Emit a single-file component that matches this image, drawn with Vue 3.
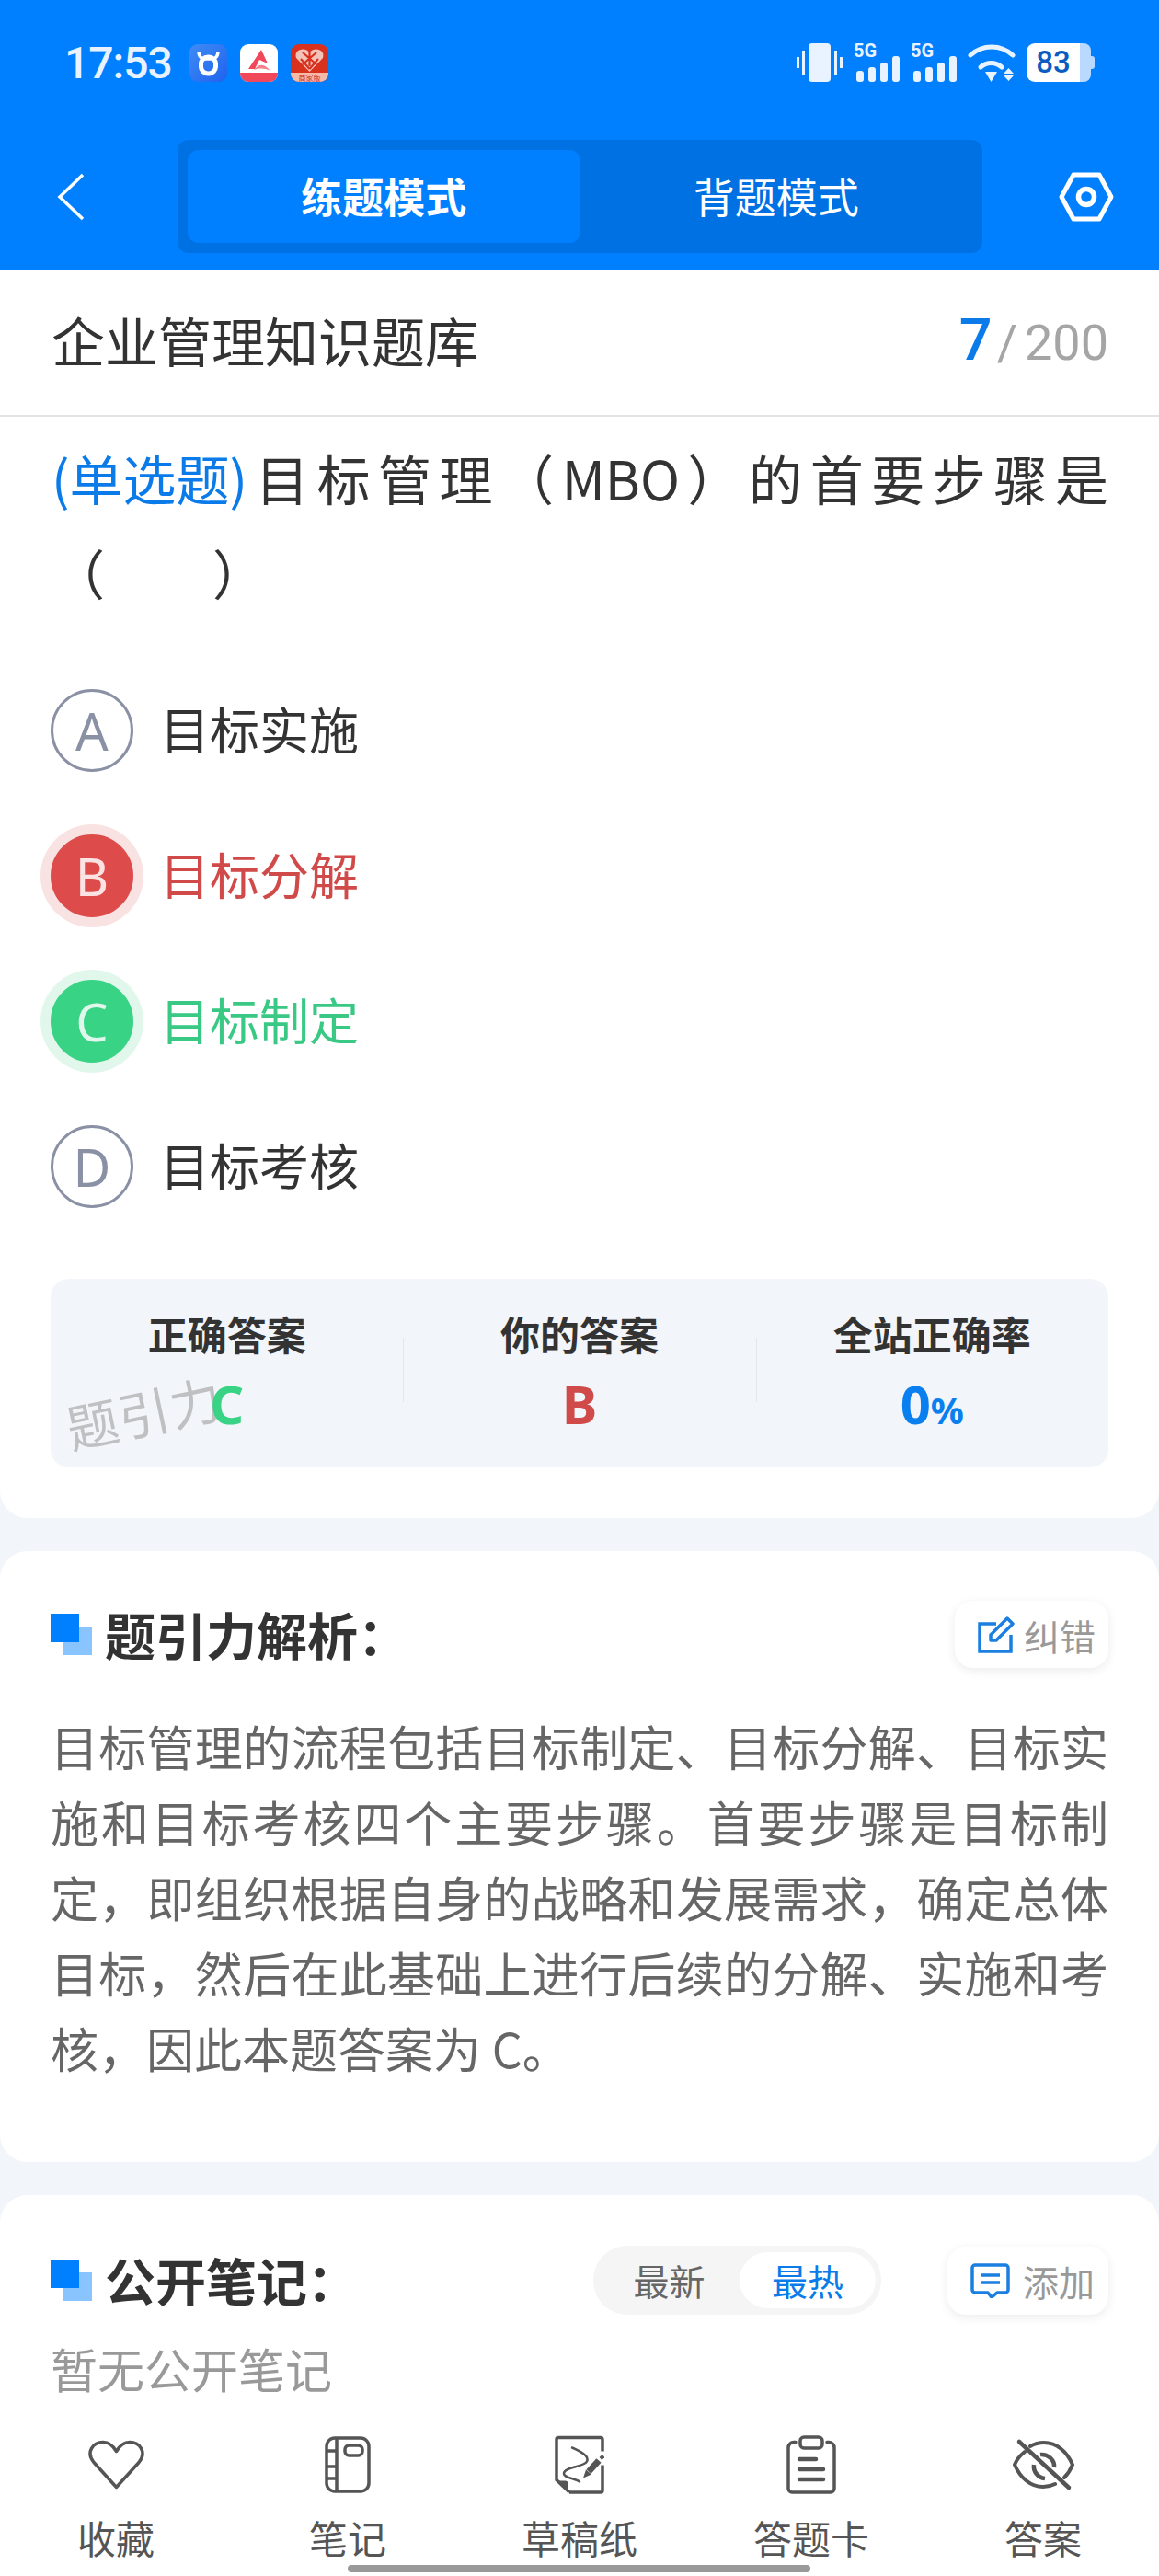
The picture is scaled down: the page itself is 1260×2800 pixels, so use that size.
<template>
  <div class="page">
    <!-- blue top area -->
    <div class="top">
      <div class="status">
        <div class="status-left">
          <span class="time">17:53</span>
          <span class="app app-blue">
            <svg viewBox="0 0 41 41" width="41" height="41"><path d="M10 8c0 5 2 7 5 8h11c3-1 5-3 5-8" fill="none" stroke="#fff" stroke-width="3.5"/><rect x="12.500" y="14" width="16" height="18" rx="7.500" fill="none" stroke="#fff" stroke-width="5"/></svg>
          </span>
          <span class="app app-white">
            <svg viewBox="0 0 41 41" width="41" height="41"><path d="M9 27 23 6l7 15-9-4-5 10z" fill="#f0485a"/><path d="M15 28c6-7 11-7 18 1-7-3-11-3-18-1z" fill="#f5808c"/><rect x="0" y="31" width="41" height="10" fill="#f0485a"/></svg>
          </span>
          <span class="app app-red">
            <svg viewBox="0 0 41 41" width="41" height="41"><path d="M20.500 30 6 15c-3-9 9-13 14.500-6C26 2 38 6 35 15z" fill="#f3c2b8"/><path d="M20.500 27 11 16M20.500 27 30 16M13 9l15 13M28 9 13 22M20.500 8v16" stroke="#d8321f" stroke-width="2.200"/><rect x="0" y="31" width="41" height="10" fill="#f7b9a8"/><text x="20.500" y="39.500" font-size="8" text-anchor="middle" fill="#c8301f">商家版</text></svg>
          </span>
        </div>
        <div class="status-right">
          <svg width="50" height="42" viewBox="0 0 50 42"><rect x="13" y="0" width="24" height="42" rx="4" fill="#e8f3ff"/><rect x="0" y="15" width="3" height="12" fill="#e8f3ff"/><rect x="6" y="8" width="3" height="26" fill="#e8f3ff"/><rect x="41" y="8" width="3" height="26" fill="#e8f3ff"/><rect x="47" y="15" width="3" height="12" fill="#e8f3ff"/></svg>
          <span class="sig"><span class="five">5G</span><span class="bars"><i class="b1"></i><i class="b2"></i><i class="b3"></i><i class="b4"></i></span></span>
          <span class="sig"><span class="five">5G</span><span class="bars"><i class="b1"></i><i class="b2"></i><i class="b3"></i><i class="b4"></i></span></span>
          <svg width="52" height="42" viewBox="0 0 52 42"><path d="M3 13C16 1 36 1 49 13" fill="none" stroke="#e8f3ff" stroke-width="5" stroke-linecap="round"/><path d="M14 26c7-6 16-6 23 0" fill="none" stroke="#e8f3ff" stroke-width="5" stroke-linecap="round"/><path d="M19 31h13l-6.500 11z" fill="#e8f3ff"/><path d="M39 33l5.500-6 5.500 6zM39 35h11l-5.500 6z" fill="#e8f3ff"/></svg>
          <span class="battery"><span class="battery-num">83</span><span class="battery-rest"></span><span class="battery-tip"></span></span>
        </div>
      </div>
      <div class="nav">
        <svg class="back" width="30" height="52" viewBox="0 0 30 52"><path d="M28 2 3 26l25 24" fill="none" stroke="#fff" stroke-width="3.500"/></svg>
        <div class="mode">
          <div class="mode-item on">练题模式</div>
          <div class="mode-item">背题模式</div>
        </div>
        <svg class="gear" width="60" height="54" viewBox="0 0 60 54"><path d="M16 3h28l13 24-13 24H16L3 27z" fill="none" stroke="#fff" stroke-width="5" stroke-linejoin="round"/><circle cx="30" cy="27" r="8.500" fill="none" stroke="#fff" stroke-width="5.500"/></svg>
      </div>
    </div>

    <!-- question -->
    <div class="card first">
      <div class="bank">
        <span class="bank-name">企业管理知识题库</span>
        <span class="bank-count"><b>7</b><i>/</i>200</span>
      </div>
      <div class="question">
        <span class="q-type">(单选题)</span>目标管理（MBO）的首要步骤是<span class="blank">（&nbsp;&nbsp;&nbsp;&nbsp;&nbsp;&nbsp;&nbsp;&nbsp;&nbsp;）</span>
      </div>
      <div class="options">
        <div v-for="o in options" :key="o.key" class="option" :class="o.state">
          <span class="letter">{{ o.key }}</span>
          <span class="opt-text">{{ o.text }}</span>
        </div>
      </div>
      <div class="result">
        <span class="watermark">题引力</span>
        <div class="res-col">
          <div class="res-label">正确答案</div>
          <div class="res-val green">C</div>
        </div>
        <div class="res-col">
          <div class="res-label">你的答案</div>
          <div class="res-val red">B</div>
        </div>
        <div class="res-col">
          <div class="res-label">全站正确率</div>
          <div class="res-val blue">0<small>%</small></div>
        </div>
      </div>
    </div>

    <!-- analysis -->
    <div class="card analysis">
      <div class="sec-head">
        <span class="sec-mark"></span>
        <span class="sec-title">题引力解析：</span>
        <span class="chip">
          <svg width="40" height="40" viewBox="0 0 40 40"><path d="M20 8H2v30h34V20" fill="none" stroke="#1a7fe0" stroke-width="3.500"/><path d="M14 20 32 2l6 6-18 18h-6z" fill="none" stroke="#1a7fe0" stroke-width="3.500" stroke-linejoin="round"/></svg>
          <span>纠错</span>
        </span>
      </div>
      <p class="analysis-text">目标管理的流程包括目标制定、目标分解、目标实施和目标考核四个主要步骤。首要步骤是目标制定，即组织根据自身的战略和发展需求，确定总体目标，然后在此基础上进行后续的分解、实施和考核，因此本题答案为 C。</p>
    </div>

    <!-- notes -->
    <div class="card notes">
      <div class="sec-head">
        <span class="sec-mark"></span>
        <span class="sec-title">公开笔记：</span>
        <span class="sort">
          <span class="sort-item">最新</span>
          <span class="sort-item on">最热</span>
        </span>
        <span class="chip add">
          <svg width="43" height="38" viewBox="0 0 43 38"><path d="M5 2h33a3 3 0 0 1 3 3v24a3 3 0 0 1-3 3h-9l-6 5-4-5H5a3 3 0 0 1-3-3V5a3 3 0 0 1 3-3z" fill="none" stroke="#1a7fe0" stroke-width="3.500" stroke-linejoin="round"/><path d="M11 13h21M11 21h21" stroke="#1a7fe0" stroke-width="3.500"/></svg>
          <span>添加</span>
        </span>
      </div>
      <div class="empty">暂无公开笔记</div>
    </div>

    <!-- bottom bar -->
    <div class="tabbar">
      <div class="tab">
        <svg width="63" height="55" viewBox="0 0 63 55"><path d="M31.500 52 7 25C-2 14 6 3 17 3c6 0 11 4 14.500 10C35 7 40 3 46 3c11 0 19 11 10 22z" fill="none" stroke="#555" stroke-width="3.500" stroke-linejoin="round"/></svg>
        <span>收藏</span>
      </div>
      <div class="tab">
        <svg width="50" height="62" viewBox="0 0 50 62"><rect x="2" y="2" width="46" height="58" rx="9" fill="none" stroke="#555" stroke-width="3.500"/><path d="M13 2v58M2 16h11M2 33h11M2 46h11" fill="none" stroke="#555" stroke-width="3.500"/><rect x="22" y="10" width="19" height="11" rx="4.500" fill="none" stroke="#555" stroke-width="3.500"/></svg>
        <span>笔记</span>
      </div>
      <div class="tab">
        <svg width="54" height="63" viewBox="0 0 54 63"><path d="M16 61.500h34a2 2 0 0 0 2-2V32M52 17V4a2 2 0 0 0-2-2H4a2 2 0 0 0-2 2v44l14 13.500" fill="none" stroke="#555" stroke-width="3.500"/><path d="M2 49h9a4 4 0 0 1 4 4v9z" fill="#555"/><path d="M19 13c9 4 19 9 16 15-3 6-25 6-25 13 0 5 12 5 17 9" fill="none" stroke="#555" stroke-width="2.500" stroke-linecap="round"/><path d="M37 39l11-12" stroke="#555" stroke-width="7"/><path d="M31 46l3-9 6 5z" fill="#555"/><path d="M50 25l3-3" stroke="#555" stroke-width="4"/></svg>
        <span>草稿纸</span>
      </div>
      <div class="tab">
        <svg width="54" height="64" viewBox="0 0 54 64"><path d="M10 7.500H8a6 6 0 0 0-6 6V58a4 4 0 0 0 4 4h42a4 4 0 0 0 4-4V13.500a6 6 0 0 0-6-6h-2" fill="none" stroke="#555" stroke-width="3.500" stroke-linecap="round"/><rect x="15" y="2" width="24" height="12" rx="4" fill="none" stroke="#555" stroke-width="3.500"/><path d="M14 26h18M14 37h26M14 48h26" stroke="#555" stroke-width="4.500" stroke-linecap="round"/></svg>
        <span>答题卡</span>
      </div>
      <div class="tab">
        <svg width="67" height="54" viewBox="0 0 67 54"><path d="M19 7c5-3 10-4 15-4 14 0 25 10 31 24-2 5-5 10-9 14M13 13C8 17 4 22 2 27c6 14 17 24 31 24 4 0 9-1 13-3" fill="none" stroke="#555" stroke-width="4" stroke-linecap="round"/><path d="M30 16c8-1 16 6 15 14M23 27c-1 7 4 14 12 15" fill="none" stroke="#555" stroke-width="4.500"/><path d="M7 2l54 50" stroke="#555" stroke-width="4.500" stroke-linecap="round"/></svg>
        <span>答案</span>
      </div>
      <span class="home-bar"></span>
    </div>
  </div>
</template>

<script setup>
// options list for the question
const options = [
  { key: 'A', text: '目标实施', state: '' },
  { key: 'B', text: '目标分解', state: 'wrong' },
  { key: 'C', text: '目标制定', state: 'right' },
  { key: 'D', text: '目标考核', state: '' },
]
</script>

<style>
html, body {
  margin: 0;
  background: #f2f5f9;
}
</style>

<style scoped>
.page {
  width: 1260px;
  height: 2800px;
  overflow: hidden;
  position: relative;
  background: #f2f5f9;
  font-family: "Noto Sans CJK SC", "Noto Sans", sans-serif;
  color: #333;
}
.top {
  height: 293px;
  background: #0080ff;
  box-sizing: border-box;
  padding-top: 47px;
}
.status {
  display: flex;
  justify-content: space-between;
  align-items: center;
  padding: 0 70px;
  height: 42px;
}
.status-left, .status-right {
  display: flex;
  align-items: center;
}
.time {
  width: 136px;
  font-family: Roboto, sans-serif;
  color: #e8f3ff;
  font-size: 48px;
  font-weight: 500;
  letter-spacing: -1px;
}
.app {
  width: 41px;
  height: 41px;
  border-radius: 9px;
  overflow: hidden;
  margin-right: 14px;
  display: block;
}
.app svg { display: block; }
.app-blue { background: linear-gradient(135deg, #3f8cf5, #1f62ee); }
.app-white { background: #fff; }
.app-red { background: #d8321f; }
.status-right { gap: 12px; }
.sig {
  position: relative;
  width: 50px;
  height: 42px;
  display: block;
}
.five {
  position: absolute;
  left: 0;
  top: -3px;
  line-height: 22px;
  font-family: Roboto, sans-serif;
  font-size: 20px;
  font-weight: 700;
  color: #e8f3ff;
}
.bars {
  position: absolute;
  right: 0;
  bottom: 0;
  display: flex;
  align-items: flex-end;
  gap: 5px;
}
.bars i {
  display: block;
  width: 8px;
  border-radius: 3px;
  background: #e8f3ff;
}
.b1 { height: 12px; }
.b2 { height: 16px; }
.b3 { height: 21px; }
.b4 { height: 28px; }
.battery {
  width: 74px;
  height: 42px;
  display: flex;
  align-items: center;
}
.battery-num {
  width: 58px;
  height: 42px;
  background: #fff;
  border-radius: 9px 0 0 9px;
  color: #0a5cc0;
  font-family: Roboto, sans-serif;
  font-size: 33px;
  font-weight: 500;
  line-height: 42px;
  text-align: center;
}
.battery-rest {
  width: 12px;
  height: 42px;
  background: #b9d9ff;
  border-radius: 0 8px 8px 0;
}
.battery-tip {
  width: 4px;
  height: 14px;
  background: #b9d9ff;
  border-radius: 0 3px 3px 0;
}
.nav {
  display: flex;
  align-items: center;
  margin-top: 63px;
  padding-left: 62px;
}
.mode {
  width: 875px;
  height: 123px;
  margin: 0 83px 0 101px;
  box-sizing: border-box;
  padding: 11px;
  background: #0071e3;
  border-radius: 12px;
  display: flex;
}
.mode-item {
  width: 427px;
  text-align: center;
  line-height: 99px;
  color: #fff;
  font-size: 45px;
}
.mode-item.on {
  background: #0080ff;
  border-radius: 12px;
  font-weight: 700;
}
.card {
  background: #fff;
  border-radius: 30px;
  margin-bottom: 36px;
}
.first {
  border-radius: 0 0 30px 30px;
  height: 1357px;
  box-sizing: border-box;
}
.bank {
  height: 160px;
  box-sizing: border-box;
  border-bottom: 2px solid #e3e3e3;
  display: flex;
  justify-content: space-between;
  align-items: center;
  padding: 0 55px 6px 56px;
}
.bank-name {
  font-size: 58px;
  color: #333;
}
.bank-count {
  color: #a5a5a5;
  font-size: 54px;
  font-family: Roboto, sans-serif;
}
.bank-count b {
  color: #0a7be8;
  font-weight: 500;
  font-size: 63px;
}
.bank-count i {
  font-style: normal;
  margin: 0 8px 0 5px;
}
.question {
  padding: 0 55px 0 56px;
  font-size: 58px;
  line-height: 103px;
  margin-top: 15px;
  height: 204px;
  text-align: justify;
}
.q-type {
  display: inline-block;
  color: #0a7be8;
}
.blank { white-space: nowrap; }
.options {
  margin-top: 43px;
  padding-left: 55px;
}
.option {
  height: 158px;
  display: flex;
  align-items: center;
}
.letter {
  width: 90px;
  height: 90px;
  box-sizing: border-box;
  border-radius: 50%;
  border: 3px solid #8a91a5;
  color: #8a91a5;
  font-size: 56px;
  font-family: "Noto Sans", sans-serif;
  display: flex;
  align-items: center;
  justify-content: center;
  margin-right: 29px;
}
.opt-text {
  font-size: 54px;
  margin-bottom: 6px;
}
.option.wrong .letter {
  background: #dd4b4b;
  border-color: #dd4b4b;
  color: #fbe3e3;
  box-shadow: 0 0 0 11px #f9e2e2;
}
.option.wrong .opt-text { color: #d14a4a; }
.option.right .letter {
  background: #39d385;
  border-color: #39d385;
  color: #e0f8ec;
  box-shadow: 0 0 0 11px #e1f7ec;
}
.option.right .opt-text { color: #39c985; }
.result {
  position: relative;
  margin: 43px 55px 0;
  height: 205px;
  background: #f2f5f9;
  border-radius: 20px;
  display: flex;
}
.watermark {
  position: absolute;
  left: 16px;
  top: 116px;
  font-size: 56px;
  line-height: 56px;
  color: rgba(120, 120, 120, 0.42);
  transform: rotate(-12deg);
  letter-spacing: 1px;
}
.res-col {
  flex: 1;
  text-align: center;
  position: relative;
}
.res-col + .res-col::before {
  content: "";
  position: absolute;
  left: 0;
  top: 64px;
  height: 70px;
  width: 1px;
  background: #e3e6ea;
}
.res-label {
  font-size: 43px;
  font-weight: 700;
  margin-top: 29px;
  line-height: 60px;
}
.res-val {
  font-family: "Noto Sans", sans-serif;
  font-size: 58px;
  font-weight: 700;
  line-height: 70px;
  margin-top: 12px;
}
.res-val small { font-size: 40px; }
.green { color: #39d385; }
.red { color: #d14a4a; }
.blue { color: #0a80f0; }
.sec-head {
  display: flex;
  align-items: center;
  position: relative;
  height: 73px;
}
.sec-mark {
  position: relative;
  width: 45px;
  height: 45px;
  margin-right: 14px;
  flex-shrink: 0;
}
.sec-mark::before {
  content: "";
  position: absolute;
  left: 14px;
  top: 14px;
  width: 31px;
  height: 31px;
  background: #8ac4ff;
}
.sec-mark::after {
  content: "";
  position: absolute;
  left: 0;
  top: 0;
  width: 31px;
  height: 31px;
  background: #0080ff;
}
.sec-title {
  font-size: 55px;
  font-weight: 700;
  flex: 1;
  margin-bottom: 4px;
}
.chip {
  height: 73px;
  width: 167px;
  box-sizing: border-box;
  padding-left: 25px;
  background: #fff;
  border-radius: 20px;
  box-shadow: 0 3px 12px rgba(0, 0, 0, 0.08);
  display: flex;
  align-items: center;
  gap: 10px;
  color: #999;
  font-size: 39px;
}
.analysis {
  padding: 54px 55px 60px;
  height: 664px;
  box-sizing: border-box;
}
.analysis-text {
  margin: 44px 0 0;
  font-size: 52px;
  line-height: 82px;
  color: #666;
  text-align: justify;
}
.notes {
  height: 800px;
  padding: 55px 55px 0;
  box-sizing: border-box;
}
.notes .sec-head { height: 75px; }
.sort {
  width: 313px;
  height: 75px;
  background: #f5f5f5;
  border-radius: 37px;
  display: flex;
  align-items: center;
  box-sizing: border-box;
  padding: 7px 6px;
  margin-right: 72px;
}
.sort-item {
  flex: 1;
  text-align: center;
  font-size: 39px;
  line-height: 61px;
  color: #666;
}
.sort-item.on {
  flex: none;
  width: 148px;
  background: #fff;
  border-radius: 31px;
  color: #0a7be8;
}
.chip.add {
  width: 175px;
  height: 74px;
  gap: 14px;
}
.empty {
  font-size: 51px;
  color: #999;
  margin-top: 21px;
}
.tabbar {
  position: absolute;
  left: 0;
  right: 0;
  bottom: 0;
  height: 160px;
  box-sizing: border-box;
  padding-top: 7px;
  background: #fff;
  display: flex;
}
.tab {
  width: 252px;
  display: flex;
  flex-direction: column;
  align-items: center;
  color: #555;
  font-size: 42px;
}
.tab svg {
  height: 64px;
  display: block;
}
.tab span {
  margin-top: 17px;
  line-height: 60px;
}
.home-bar {
  position: absolute;
  left: 378px;
  bottom: 4px;
  width: 503px;
  height: 8px;
  border-radius: 4px;
  background: #999;
}
</style>
